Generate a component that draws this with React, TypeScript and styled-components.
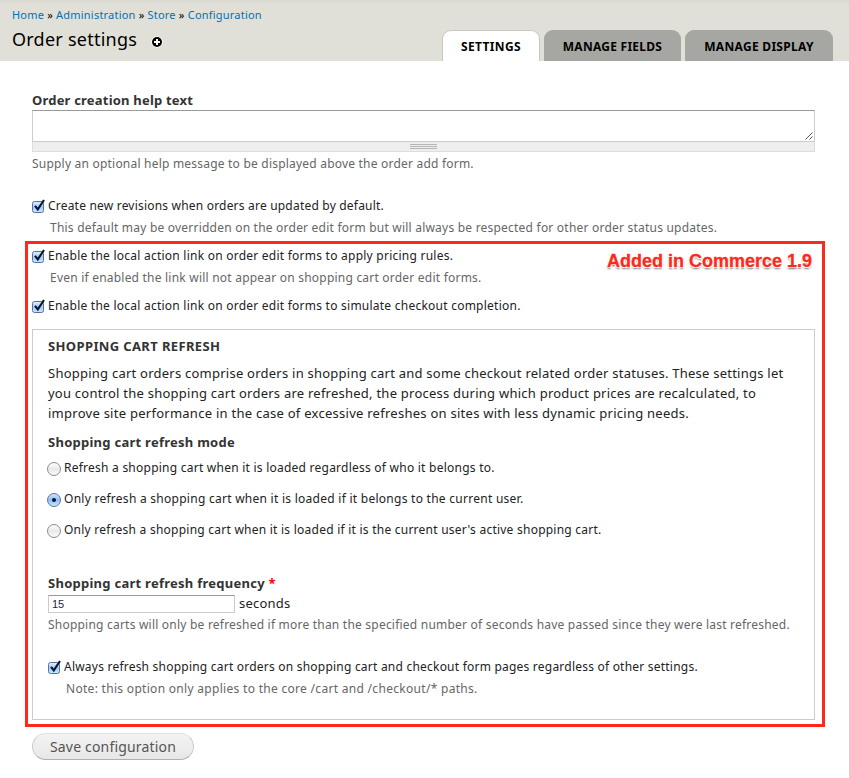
import React from 'react';
import styled, { createGlobalStyle } from 'styled-components';

const GlobalStyle = createGlobalStyle`
  * { box-sizing: border-box; }
  body {
    margin: 0;
    background: #fff;
    color: #222;
    font-family: "Noto Sans", "Open Sans", sans-serif;
    font-size: 12px;
    line-height: 20px;
    letter-spacing: 0.22px;
  }
`;

const Header = styled.header`
  display: flex;
  justify-content: space-between;
  height: 61px;
  padding: 0 16px 0 12px;
  background: linear-gradient(#d9d9d2 0, #e0e0d8 5px);
  color: #000;
`;

const Heading = styled.div`
  display: flex;
  flex-direction: column;
  padding-top: 7px;
`;

const Breadcrumb = styled.nav`
  height: 16px;
  font-size: 11px;
  line-height: 16px;
  letter-spacing: 0.21px;
  white-space: nowrap;
`;

const Crumb = styled.a`
  color: #0071b3;
  text-decoration: none;
`;

const TitleRow = styled.div`
  display: flex;
  align-items: center;
  gap: 14px;
  height: 32px;
`;

const Title = styled.h1`
  margin: 0;
  font-size: 18px;
  font-weight: 400;
  line-height: 32px;
  letter-spacing: 0.24px;
`;

const ShortcutIcon = styled.svg`
  display: block;
  margin-top: 6px;
`;

const Tabs = styled.div`
  display: flex;
  align-items: flex-end;
  gap: 4px;
`;

const Tab = styled.a<{ $active?: boolean; $width: number; $spacing: number }>`
  width: ${(p) => p.$width}px;
  height: 31px;
  border: ${(p) => (p.$active ? '1px solid #c9c9c1' : '1px solid #a6a7a2')};
  border-bottom: 0;
  border-radius: 9px 9px 0 0;
  background: ${(p) => (p.$active ? '#fff' : '#a6a7a2')};
  text-align: center;
  font-weight: 700;
  line-height: 31px;
  letter-spacing: ${(p) => p.$spacing}px;
  text-transform: uppercase;
  white-space: nowrap;
`;

const Main = styled.main`
  display: flex;
  flex-direction: column;
  align-items: stretch;
  padding: 29px 34px 0 32px;
`;

const Label = styled.label<{ $spacing?: number }>`
  height: 20px;
  color: #333;
  font-size: 13px;
  font-weight: 700;
  letter-spacing: ${(p) => p.$spacing ?? 0.2}px;
`;

const Required = styled.span`
  color: #f00;
`;

const TextBox = styled.div`
  display: flex;
  justify-content: flex-end;
  align-items: flex-end;
  height: 32px;
  padding: 0 1px 1px 0;
  border: 1px solid #ccc;
  border-top-color: #999;
  background: #fff;
`;

const Grippie = styled.div`
  display: flex;
  justify-content: center;
  align-items: center;
  height: 10px;
  border: 1px solid #ddd;
  border-top: 0;
  background: #eee;
`;

const GripLines = styled.div`
  width: 27px;
  height: 5px;
  background: repeating-linear-gradient(#b5b5b5 0 1px, #eee 1px 2px);
`;

const Description = styled.div<{ $indent?: number; $top?: number; $spacing?: number }>`
  height: 20px;
  margin-top: ${(p) => p.$top ?? 2}px;
  padding-left: ${(p) => p.$indent ?? 0}px;
  color: #666;
  letter-spacing: ${(p) => p.$spacing ?? 0.217}px;
  white-space: nowrap;
`;

const OptionRow = styled.label<{ $top: number; $spacing?: number }>`
  display: flex;
  align-items: center;
  height: 20px;
  margin-top: ${(p) => p.$top}px;
  letter-spacing: ${(p) => p.$spacing ?? 0.24}px;
  white-space: nowrap;
`;

const CheckIcon = styled.svg`
  display: block;
  flex: none;
  width: 16px;
  height: 16px;
`;

const RadioIcon = styled.span<{ $on?: boolean }>`
  display: flex;
  justify-content: center;
  align-items: center;
  flex: none;
  width: 14px;
  height: 14px;
  margin: 2px 3px 0 -1px;
  border: 1px solid ${(p) => (p.$on ? '#5c73a8' : '#8c8c8c')};
  border-radius: 50%;
  background: ${(p) =>
    p.$on
      ? 'linear-gradient(#d5e6f8 0, #8dbdf0 50%, #c4edff 100%)'
      : 'linear-gradient(#fff 0, #e9e9e9 50%, #fbfbfb 100%)'};

  &::after {
    content: '';
    width: 4px;
    height: 4px;
    border-radius: 50%;
    background: ${(p) => (p.$on ? '#08152c' : 'transparent')};
  }
`;

const Highlight = styled.section`
  position: relative;
  display: flex;
  flex-direction: column;
  height: 486px;
  margin: 3px -10px 0 -7px;
  padding: 0 7px 0 4px;
  border: 3px solid #fd2a1c;
`;

const Callout = styled.div`
  position: absolute;
  top: 7px;
  right: 10px;
  color: #fd2a1c;
  font: 700 18px/20px "Liberation Sans", Arial, sans-serif;
  letter-spacing: 0;
  white-space: nowrap;
  -webkit-text-stroke: 0.3px #fd2a1c;
  text-shadow: 1px 0 #fff, -1px 0 #fff, 0 1px #fff, 0 -1px #fff, 1px 1px #fff, -1px 1px #fff,
    0 2px 2px rgba(0, 0, 0, 0.55);
`;

const Fieldset = styled.div`
  display: flex;
  flex-direction: column;
  height: 391px;
  margin-top: 13px;
  padding: 6px 15px 0;
  border: 1px solid #ccc;
`;

const Legend = styled.div`
  height: 20px;
  color: #333;
  font-size: 13px;
  font-weight: 700;
  letter-spacing: 0.37px;
  text-transform: uppercase;
`;

const Paragraph = styled.p`
  display: flex;
  flex-direction: column;
  margin: 7px 0 9px;
  font-size: 13px;
  white-space: nowrap;
`;

const Line = styled.span<{ $spacing: number }>`
  letter-spacing: ${(p) => p.$spacing}px;
`;

const FrequencyGroup = styled.div`
  display: flex;
  flex-direction: column;
  margin-top: 33px;
`;

const InputRow = styled.div`
  display: flex;
  align-items: center;
  gap: 4px;
  height: 18px;
  margin-top: 2px;
  font-size: 13px;
`;

const Suffix = styled.span`
  height: 20px;
  margin-top: -2px;
`;

const NumberInput = styled.input`
  width: 187px;
  height: 18px;
  padding: 0 3px;
  border: 1px solid #ccc;
  border-top-color: #999;
  outline: 0;
  color: #1c2440;
  font: 11px "Liberation Sans", Arial, sans-serif;
`;

const SaveButton = styled.button`
  width: 162px;
  height: 27px;
  margin-top: 6px;
  padding: 0;
  border: 1px solid #ccc;
  border-top-color: #e2e2e2;
  border-bottom-color: #b0b0b0;
  border-radius: 14px;
  background: linear-gradient(#f3f3f3, #e7e7e7);
  color: #555;
  font: 14px/25px "Noto Sans", sans-serif;
  letter-spacing: 0.18px;
`;

const Checkbox = () => (
  <CheckIcon viewBox="0 0 16 16">
    <defs>
      <linearGradient id="check-fill" x1="0" y1="0" x2="0" y2="1">
        <stop offset="0" stopColor="#e3effb" />
        <stop offset="0.5" stopColor="#a5ccf3" />
        <stop offset="1" stopColor="#c5e9ff" />
      </linearGradient>
    </defs>
    <rect x="0.5" y="3.5" width="11" height="11" rx="2" fill="url(#check-fill)" stroke="#5a70a5" />
    <path d="M3 7.8 L5.8 11.4 L12 2" fill="none" stroke="#071530" strokeWidth="2.1" />
  </CheckIcon>
);

const RADIOS = [
  { text: 'Refresh a shopping cart when it is loaded regardless of who it belongs to.', top: 6, spacing: 0.24 },
  { text: 'Only refresh a shopping cart when it is loaded if it belongs to the current user.', top: 11, spacing: 0.265, on: true },
  { text: "Only refresh a shopping cart when it is loaded if it is the current user's active shopping cart.", top: 11, spacing: 0.24 },
];

export default function App() {
  return (
    <>
      <GlobalStyle />
      <Header>
        <Heading>
          <Breadcrumb>
            <Crumb>Home</Crumb> » <Crumb>Administration</Crumb> » <Crumb>Store</Crumb> » <Crumb>Configuration</Crumb>
          </Breadcrumb>
          <TitleRow>
            <Title>Order settings</Title>
            <ShortcutIcon width="12" height="12" viewBox="0 0 12 12">
              <circle cx="6" cy="6" r="5.8" fill="#fff" />
              <circle cx="6" cy="6" r="5" fill="#000" />
              <path d="M6 3v6M3 6h6" stroke="#fff" strokeWidth="2" />
            </ShortcutIcon>
          </TitleRow>
        </Heading>
        <Tabs>
          <Tab $active $width={98} $spacing={0.36}>Settings</Tab>
          <Tab $width={137} $spacing={0.26}>Manage fields</Tab>
          <Tab $width={148} $spacing={0.3}>Manage display</Tab>
        </Tabs>
      </Header>
      <Main>
        <Label>Order creation help text</Label>
        <TextBox>
          <svg width="8" height="8" viewBox="0 0 8 8">
            <path d="M0.5 7.5 L7.5 0.5 M4.5 7.5 L7.5 4.5" stroke="#555" fill="none" />
          </svg>
        </TextBox>
        <Grippie>
          <GripLines />
        </Grippie>
        <Description $spacing={0.21}>Supply an optional help message to be displayed above the order add form.</Description>
        <OptionRow $top={22} $spacing={0.2}>
          <Checkbox />
          Create new revisions when orders are updated by default.
        </OptionRow>
        <Description $indent={18}>
          This default may be overridden on the order edit form but will always be respected for other order status updates.
        </Description>
        <Highlight>
          <Callout>Added in Commerce 1.9</Callout>
          <OptionRow $top={2}>
            <Checkbox />
            Enable the local action link on order edit forms to apply pricing rules.
          </OptionRow>
          <Description $indent={18}>Even if enabled the link will not appear on shopping cart order edit forms.</Description>
          <OptionRow $top={8}>
            <Checkbox />
            Enable the local action link on order edit forms to simulate checkout completion.
          </OptionRow>
          <Fieldset>
            <Legend>Shopping cart refresh</Legend>
            <Paragraph>
              <Line $spacing={0.238}>
                Shopping cart orders comprise orders in shopping cart and some checkout related order statuses. These settings let
              </Line>
              <Line $spacing={0.24}>
                you control the shopping cart orders are refreshed, the process during which product prices are recalculated, to
              </Line>
              <Line $spacing={0.262}>
                improve site performance in the case of excessive refreshes on sites with less dynamic pricing needs.
              </Line>
            </Paragraph>
            <Label $spacing={0.26}>Shopping cart refresh mode</Label>
            {RADIOS.map((r) => (
              <OptionRow key={r.text} $top={r.top} $spacing={r.spacing}>
                <RadioIcon $on={r.on} />
                {r.text}
              </OptionRow>
            ))}
            <FrequencyGroup>
              <Label $spacing={0.26}>
                Shopping cart refresh frequency <Required>*</Required>
              </Label>
              <InputRow>
                <NumberInput defaultValue="15" />
                <Suffix>seconds</Suffix>
              </InputRow>
              <Description>
                Shopping carts will only be refreshed if more than the specified number of seconds have passed since they were last refreshed.
              </Description>
            </FrequencyGroup>
            <OptionRow $top={22} $spacing={0.22}>
              <Checkbox />
              Always refresh shopping cart orders on shopping cart and checkout form pages regardless of other settings.
            </OptionRow>
            <Description $indent={18} $spacing={0.3}>Note: this option only applies to the core /cart and /checkout/* paths.</Description>
          </Fieldset>
        </Highlight>
        <SaveButton>Save configuration</SaveButton>
      </Main>
    </>
  );
}
